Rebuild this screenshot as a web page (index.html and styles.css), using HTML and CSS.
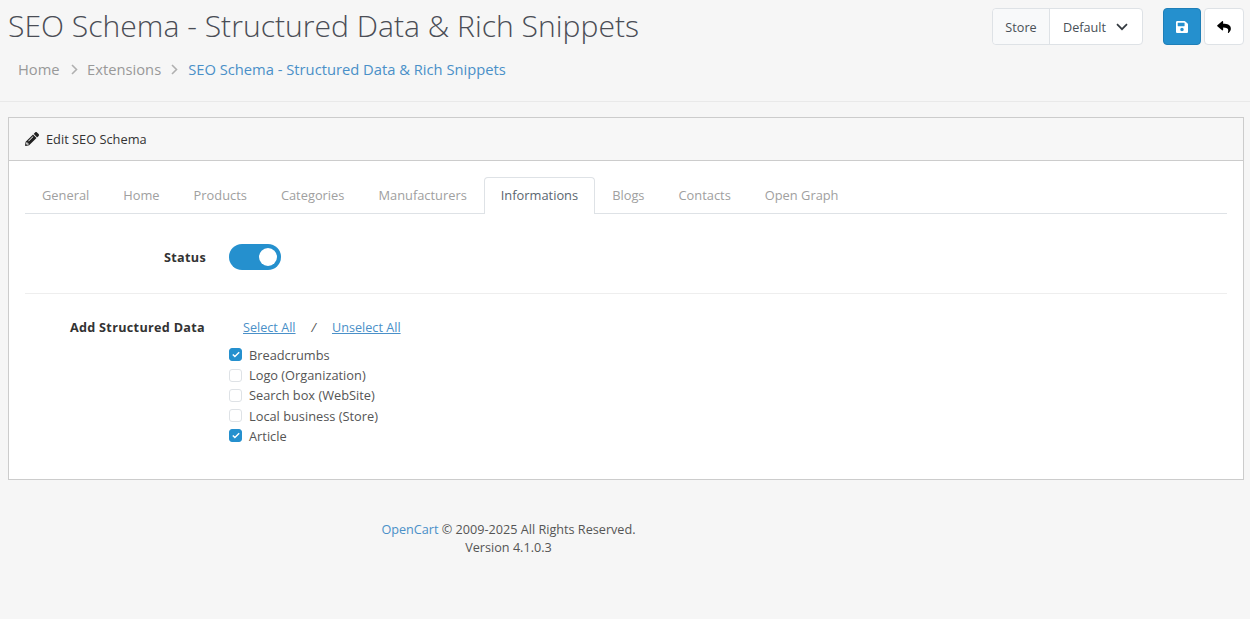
FILE: index.html
```html
<!DOCTYPE html>
<html lang="en">
<head>
<meta charset="utf-8">
<title>SEO Schema</title>
<link rel="stylesheet" href="styles.css">
</head>
<body>
<header class="page-header">
  <div class="title-col">
    <h1>SEO Schema - Structured Data &amp; Rich Snippets</h1>
    <ol class="crumbs">
      <li><a href="#">Home</a></li>
      <li class="sep"><svg viewBox="0 0 7 11" width="7" height="11"><path d="M1 1l4.500 4.500L1 10" fill="none" stroke="#b0b0b0" stroke-width="1.600"/></svg></li>
      <li><a href="#">Extensions</a></li>
      <li class="sep sep-last"><svg viewBox="0 0 7 11" width="7" height="11"><path d="M1 1l4.500 4.500L1 10" fill="none" stroke="#b0b0b0" stroke-width="1.600"/></svg></li>
      <li><a href="#" class="current">SEO Schema - Structured Data &amp; Rich Snippets</a></li>
    </ol>
  </div>
  <div class="actions">
    <div class="store">
      <span class="store-label">Store</span>
      <span class="store-value">Default
        <svg viewBox="0 0 12 8" width="12" height="8"><path d="M1 1.200 6 6.200l5-5" fill="none" stroke="#343a40" stroke-width="1.700"/></svg>
      </span>
    </div>
    <div class="buttons">
      <button class="btn btn-primary" aria-label="Save"><svg viewBox="0 32 448 448" width="12" height="12"><path fill="#fff" d="M433.941 129.941l-83.882-83.882A48 48 0 0 0 316.118 32H48C21.490 32 0 53.490 0 80v352c0 26.510 21.490 48 48 48h352c26.510 0 48-21.490 48-48V163.882a48 48 0 0 0-14.059-33.941zM224 416c-35.346 0-64-28.654-64-64 0-35.346 28.654-64 64-64s64 28.654 64 64c0 35.346-28.654 64-64 64zm96-304.520V212c0 6.627-5.373 12-12 12H76c-6.627 0-12-5.373-12-12V108c0-6.627 5.373-12 12-12h228.520c3.183 0 6.235 1.264 8.485 3.515l3.480 3.480A11.996 11.996 0 0 1 320 111.480z"/></svg></button>
      <button class="btn btn-light" aria-label="Back"><svg viewBox="0 32 512 448" width="14" height="12"><path fill="#000" d="M8.309 189.836L184.313 37.851C199.719 24.546 224 35.347 224 56.015v80.053c160.629 1.839 288 34.032 288 186.258 0 61.441-39.581 122.309-83.333 154.132-13.653 9.931-33.111-2.533-28.077-18.631 45.344-145.012-21.507-183.510-176.590-185.742V360c0 20.700-24.300 31.453-39.687 18.164l-176.004-152c-11.071-9.562-11.086-26.753 0-36.328z"/></svg></button>
    </div>
  </div>
</header>

<main class="panel">
  <div class="panel-head">
    <svg viewBox="0 0 512 512" width="14" height="14"><path fill="#222" d="M497.900 142.100 452 188c-4.700 4.700-12.300 4.700-17 0L324 77c-4.700-4.700-4.700-12.300 0-17l45.900-45.900c18.700-18.700 49.100-18.700 67.900 0l60.100 60.100c18.800 18.700 18.800 49.100 0 67.900zM285.200 98.800 23.600 360.400 2.500 481.300c-2.900 16.300 11.300 30.400 27.600 27.600l120.900-21.200 261.600-261.600c4.700-4.700 4.700-12.300 0-17l-111-111c-4.800-4.700-12.400-4.700-17.100 0zM124.100 338c-5.500-5.500-5.500-14.300 0-19.800l153.400-153.400c5.500-5.500 14.300-5.500 19.800 0s5.500 14.300 0 19.800L143.900 338c-5.500 5.500-14.300 5.500-19.800 0zM88.100 422H136v36.200l-64.400 11.300-31-31L51.900 374h36.200z"/></svg>
    <span>Edit SEO Schema</span>
  </div>
  <div class="panel-body">
    <nav class="tabs">
      <a href="#">General</a>
      <a href="#">Home</a>
      <a href="#">Products</a>
      <a href="#">Categories</a>
      <a href="#">Manufacturers</a>
      <a href="#" class="active">Informations</a>
      <a href="#">Blogs</a>
      <a href="#">Contacts</a>
      <a href="#">Open Graph</a>
    </nav>

    <div class="row row-status">
      <label class="row-label">Status</label>
      <div class="row-field"><span class="switch"><span class="knob"></span></span></div>
    </div>

    <div class="row row-data">
      <label class="row-label">Add Structured Data</label>
      <div class="row-field">
        <div class="select-links">
          <a href="#">Select All</a><span class="slash">/</span><a href="#">Unselect All</a>
        </div>
        <ul class="checks">
          <li><span class="box checked"><svg viewBox="0 0 10 8" width="8" height="7"><path d="M1 4l2.600 2.600L9 1.200" fill="none" stroke="#fff" stroke-width="1.800"/></svg></span>Breadcrumbs</li>
          <li><span class="box"></span>Logo (Organization)</li>
          <li><span class="box"></span>Search box (WebSite)</li>
          <li><span class="box"></span>Local business (Store)</li>
          <li><span class="box checked"><svg viewBox="0 0 10 8" width="8" height="7"><path d="M1 4l2.600 2.600L9 1.200" fill="none" stroke="#fff" stroke-width="1.800"/></svg></span>Article</li>
        </ul>
      </div>
    </div>
  </div>
</main>

<footer class="foot">
  <div><a href="#">OpenCart</a> &copy; 2009-2025 All Rights Reserved.</div>
  <div>Version 4.1.0.3</div>
</footer>
</body>
</html>
```
FILE: styles.css
```css
* { box-sizing: border-box; }
html, body { margin: 0; padding: 0; }
body {
  background: #f6f6f6;
  color: #555;
  font-family: "Open Sans", sans-serif;
  font-size: 12.650px;
  line-height: 18px;
  height: 619px;
  overflow: hidden;
}
a { text-decoration: none; color: #4a90c8; }

.page-header {
  display: flex;
  justify-content: space-between;
  height: 102px;
  border-bottom: 1px solid #e9e9e9;
  padding: 8px 6px 0 8px;
}
h1 {
  margin: 0;
  font-size: 30.100px;
  font-weight: 300;
  line-height: 36px;
  color: #4a4d55;
}
.crumbs {
  display: flex;
  align-items: center;
  list-style: none;
  margin: 15px 0 0;
  padding: 0 0 0 10px;
  font-size: 14.720px;
  line-height: 20px;
}
.crumbs a { color: #999; }
.crumbs a.current { color: #4a90c8; }
.crumbs .sep { display: flex; margin: 0 9px 0 11.500px; }
.crumbs .sep-last { margin: 0 10.500px 0 9.500px; }
.actions { display: flex; align-items: flex-start; }
.store {
  display: flex;
  height: 37px;
  background: #fff;
  border: 1px solid #dee2e6;
  border-radius: 4px;
  margin-right: 20px;
  line-height: 37px;
  color: #495057;
}
.store-label {
  width: 57px;
  text-align: center;
  background: #f8f9fa;
  border-right: 1px solid #dee2e6;
  border-radius: 4px 0 0 4px;
}
.store-value {
  display: flex;
  align-items: center;
  gap: 10px;
  padding: 1px 14px 0 13px;
}
.buttons { display: flex; gap: 3px; }
.btn {
  display: flex;
  align-items: center;
  justify-content: center;
  height: 37px;
  padding: 0;
  border-radius: 4px;
  border: 1px solid;
}
.btn-primary { width: 38px; background: #2590ce; border-color: #1f7fb8; }
.btn-light { width: 40px; background: #fff; border-color: #dee2e6; }

.panel {
  margin: 15px 6px 0 8px;
  height: 363px;
  background: #fff;
  border: 1px solid #ccc;
}
.panel-head {
  display: flex;
  align-items: center;
  gap: 7px;
  height: 43px;
  padding: 0 16px;
  background: #f7f7f7;
  border-bottom: 1px solid #ccc;
  color: #333;
  font-size: 12.800px;
}
.panel-body { padding: 16px; }
.tabs {
  display: flex;
  height: 37px;
  border-bottom: 1px solid #dee2e6;
  font-size: 12.850px;
}
.tabs a {
  padding: 8px 16px 0;
  height: 37px;
  color: #a0a0a0;
  border: 1px solid transparent;
  border-bottom: 0;
}
.tabs a.active {
  position: relative;
  color: #5b6670;
  background: #fff;
  border-color: #dee2e6;
  border-radius: 4px 4px 0 0;
}
.row { display: flex; }
.row-label {
  width: 180px;
  text-align: right;
  font-weight: 700;
  color: #333;
  letter-spacing: .3px;
}
.row-field { margin-left: 24px; }
.row-status {
  height: 80px;
  padding-top: 30px;
  border-bottom: 1px solid #eee;
}
.row-status .row-label { padding-top: 4px; width: 181px; }
.row-status .row-field { margin-left: 23px; }
.switch {
  display: block;
  width: 52px;
  height: 26px;
  border-radius: 13px;
  background: #2590ce;
  position: relative;
}
.knob {
  position: absolute;
  top: 4px;
  right: 4px;
  width: 18px;
  height: 18px;
  border-radius: 50%;
  background: #fff;
}
.row-data { padding-top: 24px; }
.select-links { display: flex; padding-left: 14px; height: 18px; }
.select-links a { text-decoration: underline; }
.slash { margin: 0 16px; font-style: italic; }
.checks { list-style: none; margin: 8.700px 0 0; padding: 0; font-size: 12.800px; }
.checks li {
  display: flex;
  align-items: center;
  height: 20.250px;
  gap: 7px;
}
.box {
  display: flex;
  align-items: center;
  justify-content: center;
  width: 13px;
  height: 13px;
  background: #fff;
  border: 1px solid #dee2e6;
  border-radius: 3px;
}
.box.checked { background: #2590ce; border-color: #2590ce; }
.foot {
  width: 1017px;
  margin-top: 40px;
  text-align: center;
}
```
